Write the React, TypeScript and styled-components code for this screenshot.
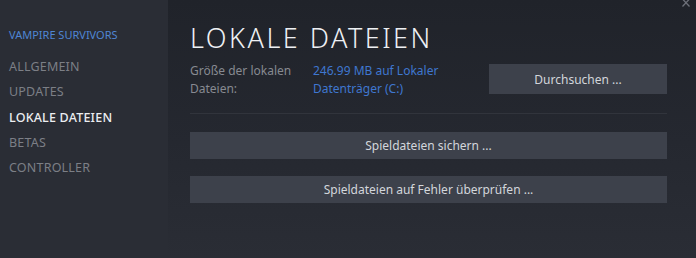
import React from "react";
import styled, { createGlobalStyle } from "styled-components";

const Global = createGlobalStyle`
  html, body { margin: 0; padding: 0; background: #22252c; }
  body { font-family: "Noto Sans", "Open Sans", sans-serif; }
  #root { width: 696px; height: 258px; overflow: hidden; }
`;

const Shell = styled.div`
  display: flex;
  width: 696px;
  height: 258px;
  position: relative;
`;

const Sidebar = styled.nav`
  width: 168px;
  flex-shrink: 0;
  background: #2a2d35;
  padding: 27px 0 0 9px;
  box-sizing: border-box;
  display: flex;
  flex-direction: column;
`;

const GameTitle = styled.div`
  color: #4f86d3;
  font-size: 11px;
  line-height: 16px;
  margin-bottom: 11px;
`;

const NavItem = styled.div<{ $active?: boolean }>`
  color: ${(p) => (p.$active ? "#eceef1" : "#7c7f86")};
  font-size: 12.5px;
  line-height: 25.3px;
  letter-spacing: 0.2px;
  font-weight: ${(p) => (p.$active ? 500 : 400)};
`;

const Main = styled.main`
  flex: 1;
  background: linear-gradient(to bottom, #20232a 0%, #252830 55%, #2a2d35 100%);
  padding: 22px 29px 0 22px;
  box-sizing: border-box;
  display: flex;
  flex-direction: column;
`;

const Title = styled.h1`
  margin: 0;
  color: #eef0f3;
  font-weight: 300;
  font-size: 27px;
  line-height: 32px;
  letter-spacing: 2.5px;
`;

const InfoRow = styled.div`
  display: flex;
  align-items: flex-start;
  margin-top: 8px;
`;

const Label = styled.div`
  width: 123px;
  color: #878a91;
  font-size: 12px;
  line-height: 18px;
`;

const Value = styled.div`
  width: 150px;
  color: #3f77d0;
  font-size: 12px;
  line-height: 18px;
`;

const Button = styled.button<{ $wide?: boolean }>`
  border: none;
  background: #3d414b;
  color: #d3d6db;
  font-family: inherit;
  font-size: 12px;
  height: ${(p) => (p.$wide ? "27px" : "30px")};
  width: ${(p) => (p.$wide ? "100%" : "178px")};
  margin-left: ${(p) => (p.$wide ? "0" : "auto")};
  margin-top: ${(p) => (p.$wide ? "0" : "2px")};
  padding: 0;
  cursor: pointer;
`;

const Divider = styled.div`
  height: 1px;
  background: #31343c;
  margin: 15px 0 18px;
`;

const Stack = styled.div`
  display: flex;
  flex-direction: column;
  gap: 17px;
`;

const Close = styled.svg`
  position: absolute;
  top: 0;
  right: 6px;
  width: 8px;
  height: 7px;
`;

export default function App() {
  return (
    <>
      <Global />
      <Shell>
        <Sidebar>
          <GameTitle>VAMPIRE SURVIVORS</GameTitle>
          <NavItem>ALLGEMEIN</NavItem>
          <NavItem>UPDATES</NavItem>
          <NavItem $active>LOKALE DATEIEN</NavItem>
          <NavItem>BETAS</NavItem>
          <NavItem>CONTROLLER</NavItem>
        </Sidebar>
        <Main>
          <Title>LOKALE DATEIEN</Title>
          <InfoRow>
            <Label>
              Größe der lokalen
              <br />
              Dateien:
            </Label>
            <Value>246.99 MB auf Lokaler Datenträger (C:)</Value>
            <Button>Durchsuchen ...</Button>
          </InfoRow>
          <Divider />
          <Stack>
            <Button $wide>Spieldateien sichern ...</Button>
            <Button $wide>Spieldateien auf Fehler überprüfen ...</Button>
          </Stack>
        </Main>
        <Close viewBox="0 0 8 7">
          <path d="M0.5 -1 L7.5 6.5 M7.5 -1 L0.5 6.5" stroke="#6d7079" strokeWidth="1.3" fill="none" />
        </Close>
      </Shell>
    </>
  );
}
